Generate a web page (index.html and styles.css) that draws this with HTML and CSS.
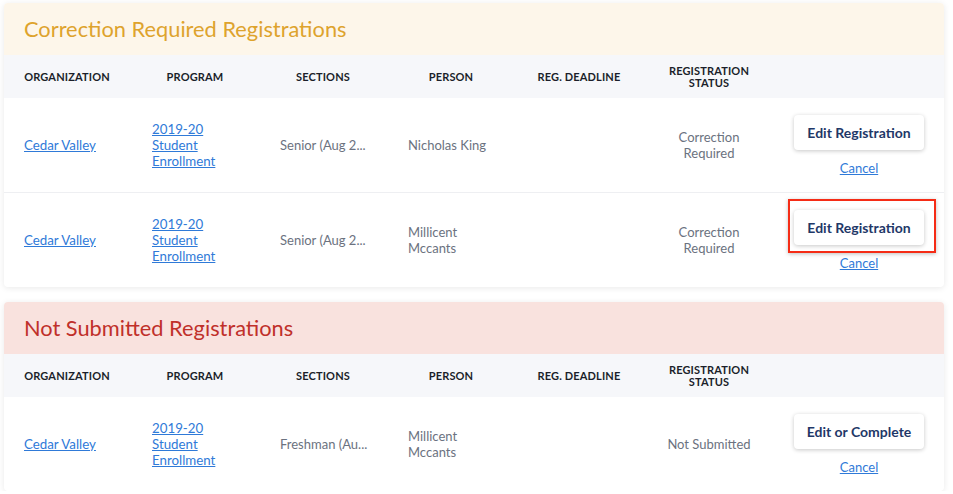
FILE: index.html
```html
<!DOCTYPE html>
<html>
<head>
<meta charset="utf-8">
<link rel="stylesheet" href="styles.css">
</head>
<body>
<div class="page">
  <section class="card">
    <div class="card-title title-warn">Correction Required Registrations</div>
    <div class="grid head">
      <div class="th"><span>ORGANIZATION</span></div>
      <div class="th"><span>PROGRAM</span></div>
      <div class="th"><span>SECTIONS</span></div>
      <div class="th"><span>PERSON</span></div>
      <div class="th"><span>REG. DEADLINE</span></div>
      <div class="th th-status"><span>REGISTRATION<br>STATUS</span></div>
      <div class="th"></div>
    </div>
    <div class="grid row">
      <div class="td"><a href="#">Cedar Valley</a></div>
      <div class="td"><a href="#">2019-20 Student Enrollment</a></div>
      <div class="td nowrap">Senior (Aug 2...</div>
      <div class="td">Nicholas King</div>
      <div class="td"></div>
      <div class="td status">Correction Required</div>
      <div class="td actions">
        <button class="btn">Edit Registration</button>
        <a href="#" class="cancel">Cancel</a>
      </div>
    </div>
    <div class="grid row">
      <div class="td"><a href="#">Cedar Valley</a></div>
      <div class="td"><a href="#">2019-20 Student Enrollment</a></div>
      <div class="td nowrap">Senior (Aug 2...</div>
      <div class="td">Millicent Mccants</div>
      <div class="td"></div>
      <div class="td status">Correction Required</div>
      <div class="td actions">
        <div class="highlight-wrap">
          <button class="btn">Edit Registration</button>
          <span class="highlight"></span>
        </div>
        <a href="#" class="cancel">Cancel</a>
      </div>
    </div>
  </section>

  <section class="card">
    <div class="card-title title-danger">Not Submitted Registrations</div>
    <div class="grid head">
      <div class="th"><span>ORGANIZATION</span></div>
      <div class="th"><span>PROGRAM</span></div>
      <div class="th"><span>SECTIONS</span></div>
      <div class="th"><span>PERSON</span></div>
      <div class="th"><span>REG. DEADLINE</span></div>
      <div class="th th-status"><span>REGISTRATION<br>STATUS</span></div>
      <div class="th"></div>
    </div>
    <div class="grid row">
      <div class="td"><a href="#">Cedar Valley</a></div>
      <div class="td"><a href="#">2019-20 Student Enrollment</a></div>
      <div class="td nowrap">Freshman (Au...</div>
      <div class="td">Millicent Mccants</div>
      <div class="td"></div>
      <div class="td status">Not Submitted</div>
      <div class="td actions">
        <button class="btn">Edit or Complete</button>
        <a href="#" class="cancel">Cancel</a>
      </div>
    </div>
  </section>
</div>
</body>
</html>
```

FILE: styles.css
```css
* { box-sizing: border-box; }
html, body { margin: 0; padding: 0; background: #ffffff; }
body {
  font-family: Lato, "Liberation Sans", Arial, sans-serif;
  color: #6b7280;
  font-size: 13px;
}
.page {
  padding: 3px 9px 0 4px;
  display: flex;
  flex-direction: column;
  gap: 15px;
}
.card {
  width: 940px;
  background: #fff;
  border-radius: 4px;
  box-shadow: 0 1px 6px rgba(0, 0, 0, 0.09);
}
.card-title {
  height: 52px;
  display: flex;
  align-items: center;
  padding: 0 20px 1px;
  font-size: 21.8px;
  border-radius: 4px 4px 0 0;
}
.title-warn { background: #fdf6ea; color: #dea32d; }
.title-danger { background: #f9e2de; color: #c0302a; }

.grid {
  display: grid;
  grid-template-columns: 128px 128px 128px 128px 128px 90px 1fr;
  padding: 0 20px;
}
.head {
  background: #f6f7fa;
  height: 43px;
  align-items: center;
}
.th {
  font-size: 11px;
  font-weight: 700;
  color: #1b1f2a;
  line-height: 12px;
  letter-spacing: 0.15px;
}
.th span {
  display: block;
  width: 86px;
  text-align: center;
  white-space: nowrap;
}
.th-status span { width: 90px; }

.row {
  align-items: center;
  padding-top: 23px;
  padding-bottom: 23px;
  border-top: 1px solid #eeeff2;
}
.head + .row { border-top: none; }
.td {
  line-height: 16px;
  padding-right: 40px;
  color: #6b7280;
}
.td a { color: #2f7ad8; text-decoration: underline; font-size: 13.3px; }
.nowrap { white-space: nowrap; padding-right: 0; }
.status { padding-right: 0; text-align: center; }
.actions {
  padding-right: 0;
  display: flex;
  flex-direction: column;
  align-items: flex-end;
  margin: -6px 0;
}
.btn {
  width: 130px;
  height: 35px;
  border: none;
  background: #fff;
  border-radius: 4px;
  box-shadow: 0 1px 4px rgba(0, 0, 0, 0.22);
  font-family: inherit;
  font-size: 14px;
  font-weight: 700;
  color: #1f3868;
  padding: 0;
}
.td a.cancel {
  display: block;
  width: 130px;
  text-align: center;
  font-size: 13px;
  line-height: 14px;
  margin-top: 11px;
}
.highlight-wrap { position: relative; }
.highlight {
  position: absolute;
  left: -6px;
  top: -11px;
  right: -12px;
  bottom: -8px;
  border: 2.5px solid #f52c16;
  box-shadow: 0 1px 4px rgba(0, 0, 0, 0.25);
  pointer-events: none;
}
```
